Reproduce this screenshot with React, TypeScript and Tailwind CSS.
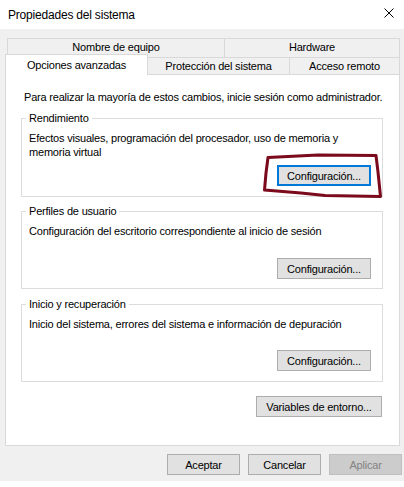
import React from 'react'

function WinButton({
  label,
  width,
  focused = false,
  disabled = false,
}: {
  label: string
  width: string
  focused?: boolean
  disabled?: boolean
}): React.ReactElement {
  const base = 'h-[21px] flex items-center justify-center whitespace-nowrap'
  if (focused) {
    return <div className={`${base} ${width} bg-[#e1e1e1] border-2 border-[#0078d7]`}>{label}</div>
  }
  if (disabled) {
    return (
      <div className={`${base} ${width} bg-[#cccccc] border border-[#bfbfbf] text-[#838383]`}>
        {label}
      </div>
    )
  }
  return <div className={`${base} ${width} bg-[#e1e1e1] border border-[#adadad]`}>{label}</div>
}

function Group({
  title,
  className,
  children,
}: {
  title: string
  className: string
  children: React.ReactNode
}): React.ReactElement {
  return (
    <fieldset className={`ml-[15px] w-[362px] border border-[#dcdcdc] ${className}`}>
      <legend className="ml-[4px] px-[3px] leading-[14px]">{title}</legend>
      {children}
    </fieldset>
  )
}

export default function App(): React.ReactElement {
  return (
    <div className="relative w-[404px] h-[487px] bg-white overflow-hidden text-[11px] leading-[14px] text-black tracking-[-0.2px] font-['Liberation_Sans',Arial,sans-serif]">
      {/* Title bar */}
      <div className="h-[29px] flex items-center justify-between pl-[8px] pr-[10px]">
        <span className="text-[12px]">Propiedades del sistema</span>
        <svg width="10" height="10" viewBox="0 0 10 10" className="-mt-[3px]">
          <path d="M0.5 0.5 L9.5 9.5 M9.5 0.5 L0.5 9.5" stroke="#000" strokeWidth="1" fill="none" />
        </svg>
      </div>

      {/* Dialog body */}
      <div className="bg-[#f0f0f0] flex flex-col pl-[5px] pr-[4px] pt-[9px]">
        {/* Tab row 1 (behind) */}
        <div className="flex ml-[2px] h-[19px]">
          <div className="w-[218px] border-x border-t border-[#d9d9d9] text-center pt-[1px]">
            Nombre de equipo
          </div>
          <div className="flex-1 border-t border-r border-[#d9d9d9] text-center pt-[1px]">Hardware</div>
        </div>

        {/* Tab row 2 (front) */}
        <div className="relative z-10 flex items-end -mt-[3px] -mb-px h-[21px]">
          <div className="w-[143px] h-[21px] bg-white border-x border-t border-[#d9d9d9] text-center pt-[3px]">
            Opciones avanzadas
          </div>
          <div className="w-[142px] h-[18px] border-t border-r border-b border-[#d9d9d9] text-center pt-[1px]">
            Protección del sistema
          </div>
          <div className="flex-1 h-[18px] border-t border-r border-b border-[#d9d9d9] text-center pt-[1px]">
            Acceso remoto
          </div>
        </div>

        {/* Tab page */}
        <div className="h-[372px] bg-white border border-[#d9d9d9] flex flex-col">
          <p className="pl-[18px] pt-[15px]">
            Para realizar la mayoría de estos cambios, inicie sesión como administrador.
          </p>

          <Group title="Rendimiento" className="mt-[7px]">
            <div className="pl-[7px] pt-[6px]">
              Efectos visuales, programación del procesador, uso de memoria y
              <br />
              memoria virtual
            </div>
            <div className="flex justify-end pr-[11px] mt-[6px] pb-[10px]">
              <WinButton label="Configuración..." width="w-[94px]" focused />
            </div>
          </Group>

          <Group title="Perfiles de usuario" className="mt-[7px]">
            <div className="pl-[7px] pt-[6px]">
              Configuración del escritorio correspondiente al inicio de sesión
            </div>
            <div className="flex justify-end pr-[11px] mt-[20px] pb-[9px]">
              <WinButton label="Configuración..." width="w-[94px]" />
            </div>
          </Group>

          <Group title="Inicio y recuperación" className="mt-[8px]">
            <div className="pl-[7px] pt-[6px]">
              Inicio del sistema, errores del sistema e información de depuración
            </div>
            <div className="flex justify-end pr-[11px] mt-[19px] pb-[10px]">
              <WinButton label="Configuración..." width="w-[94px]" />
            </div>
          </Group>

          <div className="flex justify-end mr-[17px] mt-[14px]">
            <WinButton label="Variables de entorno..." width="w-[126px]" />
          </div>
        </div>

        {/* Dialog buttons */}
        <div className="flex justify-end gap-[8px] -mr-[2px] pt-[8px] pb-[6px]">
          <WinButton label="Aceptar" width="w-[73px]" />
          <WinButton label="Cancelar" width="w-[73px]" />
          <WinButton label="Aplicar" width="w-[73px]" disabled />
        </div>
      </div>

      {/* Hand-drawn highlight over the first button */}
      <svg
        className="absolute left-0 top-0 pointer-events-none"
        width="404"
        height="487"
        viewBox="0 0 404 487"
      >
        <path
          d="M268 157.5 L318 155 L376 155.5 L378 172 L380.5 196.5 L325 195.5 L301 193 L264.5 190 L266 173 Z"
          fill="none"
          stroke="#7a0a1c"
          strokeWidth="3"
          strokeLinejoin="round"
        />
      </svg>
    </div>
  )
}
